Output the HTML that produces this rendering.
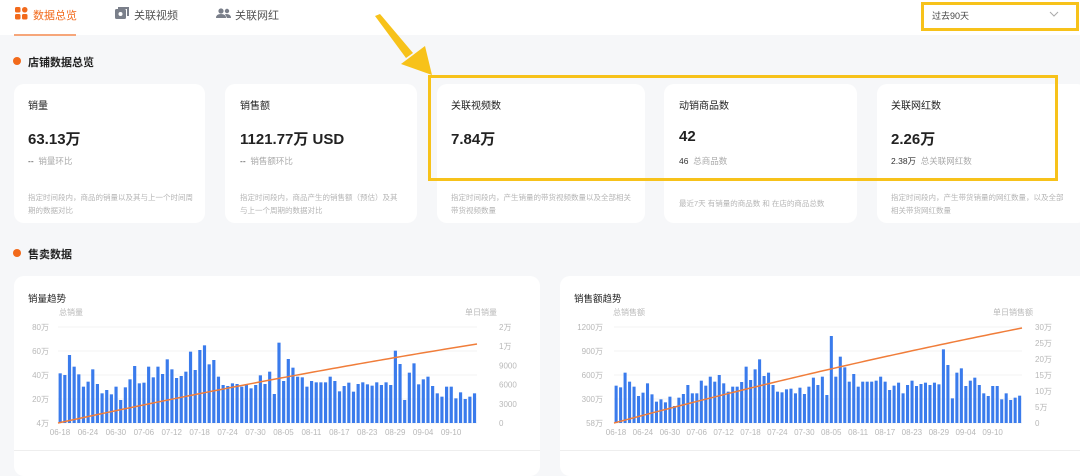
<!DOCTYPE html>
<html><head><meta charset="utf-8"><style>
*{margin:0;padding:0;box-sizing:border-box}
body{width:1080px;height:461px;overflow:hidden;background:#f6f7f9;font-family:"Liberation Sans","Noto Sans CJK SC",sans-serif;position:relative;color:#222}
.abs{position:absolute}
.top{left:0;top:0;width:1080px;height:35px;background:#fff}
.tab{font-size:11px;top:7px;color:#555}
.card{background:#fff;border-radius:10px}
.ct{font-size:10px;color:#222}
.cv{font-size:15px;font-weight:bold;color:#222}
.cs{font-size:8.5px;color:#aaa}
.cd{font-size:7.5px;color:#b5b5b5;line-height:13px}
.sec{font-size:11px;font-weight:bold;color:#222}
.dot{width:8px;height:8px;border-radius:50%;background:#f26a1b}
</style></head><body>
<div class="abs top"></div>
<svg class="abs" style="left:15px;top:7px" width="13" height="13"><rect x="0" y="0" width="5.5" height="5.5" rx="1.5" fill="#f26a1b"/><rect x="7" y="0" width="5.5" height="5.5" rx="2.7" fill="#f26a1b"/><rect x="0" y="7" width="5.5" height="5.5" rx="1.5" fill="#f26a1b"/><rect x="7" y="7" width="5.5" height="5.5" rx="1.5" fill="#f26a1b"/></svg>
<div class="abs tab" style="left:33px;color:#f26a1b">数据总览</div>
<div class="abs" style="left:14px;top:34px;width:62px;height:2px;background:#f6a67a"></div>
<svg class="abs" style="left:115px;top:7px" width="14" height="13"><rect x="0" y="2" width="11" height="10" rx="1.5" fill="#7a7f8a"/><rect x="3" y="0" width="11" height="2" fill="#7a7f8a"/><rect x="12" y="0" width="2" height="9" fill="#7a7f8a"/><circle cx="5.5" cy="7" r="2" fill="#fff"/></svg>
<div class="abs tab" style="left:134px">关联视频</div>
<svg class="abs" style="left:216px;top:8px" width="16" height="12"><circle cx="5" cy="3" r="2.6" fill="#7a7f8a"/><path d="M0 10 Q0 6 5 6 Q10 6 10 10Z" fill="#7a7f8a"/><circle cx="11" cy="3" r="2.2" fill="#7a7f8a"/><path d="M9 6 Q15 5.5 15 10 H11Z" fill="#7a7f8a"/></svg>
<div class="abs tab" style="left:235px">关联网红</div>
<div class="abs" style="left:921px;top:2px;width:158px;height:29px;border:3px solid #f7c21a;background:#fff"></div>
<div class="abs" style="left:932px;top:9px;font-size:9px;color:#444">过去90天</div>
<svg class="abs" style="left:1049px;top:11px" width="10" height="6"><path d="M1 1 L5 5 L9 1" stroke="#aaa" fill="none"/></svg>
<svg class="abs" style="left:0;top:0" width="1080" height="100"><path d="M375 16 L380 14 L413 53 L406 58Z" fill="#f7c21a"/><path d="M401 64 L425 46 L432 75Z" fill="#f7c21a"/></svg>

<div class="abs dot" style="left:13px;top:57px"></div>
<div class="abs sec" style="left:28px;top:54px">店铺数据总览</div>

<div class="abs card" style="left:14px;top:84px;width:191px;height:139px"></div>
<div class="abs card" style="left:225px;top:84px;width:192px;height:139px"></div>
<div class="abs card" style="left:437px;top:84px;width:208px;height:139px"></div>
<div class="abs card" style="left:664px;top:84px;width:193px;height:139px"></div>
<div class="abs card" style="left:877px;top:84px;width:210px;height:139px"></div>

<div class="abs ct" style="left:28px;top:97px">销量</div>
<div class="abs cv" style="left:28px;top:128px">63.13万</div>
<div class="abs cs" style="left:28px;top:155px"><span style="color:#333">--</span>&nbsp;&nbsp;销量环比</div>
<div class="abs cd" style="left:28px;top:191px;width:165px">指定时间段内，商品的销量以及其与上一个时间周期的数据对比</div>

<div class="abs ct" style="left:240px;top:97px">销售额</div>
<div class="abs cv" style="left:240px;top:128px">1121.77万 USD</div>
<div class="abs cs" style="left:240px;top:155px"><span style="color:#333">--</span>&nbsp;&nbsp;销售额环比</div>
<div class="abs cd" style="left:240px;top:191px;width:160px">指定时间段内，商品产生的销售额（预估）及其与上一个周期的数据对比</div>

<div class="abs ct" style="left:451px;top:97px">关联视频数</div>
<div class="abs cv" style="left:451px;top:128px">7.84万</div>
<div class="abs cd" style="left:451px;top:191px;width:180px">指定时间段内，产生销量的带货视频数量以及全部相关带货视频数量</div>

<div class="abs ct" style="left:679px;top:97px">动销商品数</div>
<div class="abs cv" style="left:679px;top:128px">42</div>
<div class="abs cs" style="left:679px;top:155px"><span style="color:#333">46</span>&nbsp;&nbsp;总商品数</div>
<div class="abs cd" style="left:679px;top:197px;width:175px">最近7天 有销量的商品数 和 在店的商品总数</div>

<div class="abs ct" style="left:891px;top:97px">关联网红数</div>
<div class="abs cv" style="left:891px;top:128px">2.26万</div>
<div class="abs cs" style="left:891px;top:155px"><span style="color:#333">2.38万</span>&nbsp;&nbsp;总关联网红数</div>
<div class="abs cd" style="left:891px;top:191px;width:175px">指定时间段内，产生带货销量的网红数量，以及全部相关带货网红数量</div>

<div class="abs" style="left:428px;top:75px;width:630px;height:106px;border:3px solid #f7c21a"></div>

<div class="abs dot" style="left:13px;top:249px"></div>
<div class="abs sec" style="left:28px;top:246px">售卖数据</div>

<div class="abs card" style="left:14px;top:276px;width:526px;height:200px"></div>
<div class="abs card" style="left:560px;top:276px;width:530px;height:200px"></div>
<div class="abs" style="left:14px;top:450px;width:526px;height:1px;background:#eee"></div>
<div class="abs" style="left:560px;top:450px;width:520px;height:1px;background:#eee"></div>
<div class="abs ct" style="left:28px;top:291px;font-size:9.5px">销量趋势</div>
<div class="abs ct" style="left:574px;top:291px;font-size:9.5px">销售额趋势</div>

<svg id="ch" class="abs" style="left:0;top:0" width="1080" height="461" font-family="Liberation Sans, Noto Sans CJK SC, sans-serif" font-size="8" fill="#bbb"></svg>
<script>
var s=document.getElementById('ch'),h='';
function txt(x,y,t,a){h+='<text x="'+x+'" y="'+y+'" text-anchor="'+(a||'start')+'" fill="#b8b8b8">'+t+'</text>';}
var d=['06-18','06-24','06-30','07-06','07-12','07-18','07-24','07-30','08-05','08-11','08-17','08-23','08-29','09-04','09-10'];
function chart(x0,x1,base,top,vals,lY,rY,lt,rt,lx,rx,endY){
 for(var i=0;i<5;i++){var y=base-(base-top)*i/4;h+='<line x1="'+x0+'" x2="'+x1+'" y1="'+y+'" y2="'+y+'" stroke="#f3f3f3"/>';}
 var n=vals.length,w=(x1-x0)/n;
 for(var i=0;i<n;i++){var y=230+vals[i]/3;h+='<rect x="'+(x0+i*w+0.6)+'" y="'+y+'" width="'+(w*0.68)+'" height="'+(base-y)+'" fill="#3a7bec"/>';}
 var p='M'+x0+' '+base;for(var i=1;i<=n;i++){var t=i/n;p+=' L'+(x0+t*(x1-x0))+' '+(base-(base-endY)*(t*1.15-0.15*t*t));}
 h+='<path d="'+p+'" stroke="#f07d3a" stroke-width="1.5" fill="none"/>';
 for(var i=0;i<5;i++){var y=base-(base-top)*i/4+3;txt(lx,y,lY[i],'end');}
 for(var i=0;i<rY.length;i++){var y=base-(base-top)*i/(rY.length-1)+3;txt(rx,y,rY[i]);}
 txt(lx+10,top-12,lt);txt(rx-2,top-12,rt,'end');
 for(var i=0;i<d.length;i++)txt(x0+i*6*w+2,base+12,d[i],'middle');
}
var v1=[430,435,375,410,433,470,455,418,462,490,480,493,470,510,472,448,408,460,458,410,442,410,432,388,418,444,438,425,365,420,360,346,403,390,440,465,468,460,462,470,462,475,465,436,462,425,492,338,453,387,413,440,442,470,453,457,457,457,440,453,484,468,458,485,462,457,463,467,457,465,457,465,362,402,510,428,400,463,448,440,468,490,500,470,470,505,487,507,500,490];
var v2=[467,472,428,455,470,498,488,460,493,515,508,517,500,528,503,492,465,490,490,452,467,440,455,435,460,485,470,470,456,410,450,418,388,438,428,465,485,487,478,476,490,473,492,470,443,465,440,495,318,440,380,412,455,432,470,455,455,455,452,440,455,480,467,458,490,465,452,468,462,458,465,458,463,358,405,505,428,415,468,452,443,465,490,498,468,468,508,490,510,503,497];
chart(58,477,423,327,v1,['4万','20万','40万','60万','80万'],['0','3000','6000','9000','1万','2万'],'总销量','单日销量',49,499,344);
chart(614,1022,423,327,v2,['58万','300万','600万','900万','1200万'],['0','5万','10万','15万','20万','25万','30万'],'总销售额','单日销售额',603,1035,328);
s.innerHTML=h;
</script>
</body></html>
